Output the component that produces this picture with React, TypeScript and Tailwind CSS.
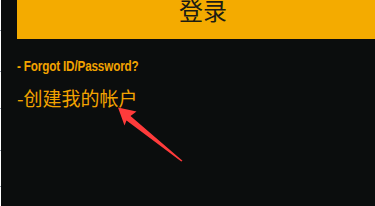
import React from 'react';

const cjk = '"Noto Sans CJK SC", "Noto Sans", sans-serif';
const narrow = '"Liberation Sans", Arial, sans-serif';

function RulerEdge() {
  const ticks = [30, 41, 37, 42, 36];
  return (
    <div className="w-px shrink-0 bg-white flex flex-col">
      {ticks.map((t, i) => (
        <div key={i} className="h-px w-px bg-gray-400" style={{ marginTop: i === 0 ? t : t - 1 }} />
      ))}
    </div>
  );
}

export default function App() {
  return (
    <div className="relative flex w-[375px] h-[206px] overflow-hidden bg-[#0b0d0d]">
      <RulerEdge />
      <div className="flex-1 flex flex-col items-start pl-[16px]">
        <button
          type="button"
          className="-mt-[20px] h-[59px] w-[372px] shrink-0 bg-[#f4ab00] text-[#1c1c14] text-[24px] leading-none flex items-center justify-center"
          style={{ fontFamily: cjk }}
        >
          登录
        </button>

        <a
          className="mt-[18px] inline-block origin-left scale-x-[0.78] whitespace-nowrap text-[15px] leading-[18px] font-bold tracking-[-0.2px] text-[#f2a300]"
          style={{ fontFamily: narrow }}
        >
          - Forgot ID/Password?
        </a>

        <a className="mt-[12px] text-[19px] leading-[22px] text-[#f2a300]" style={{ fontFamily: cjk }}>
          -创建我的帐户
        </a>
      </div>

      {/* annotation arrow */}
      <svg className="absolute left-0 top-0 pointer-events-none" width="375" height="206" viewBox="0 0 375 206">
        <polygon
          points="118,107.5 136.5,111.5 130.5,116 182.5,160.8 181.3,161.5 126.5,120.5 124.5,125.5"
          fill="#ff3b3b"
        />
      </svg>
    </div>
  );
}
